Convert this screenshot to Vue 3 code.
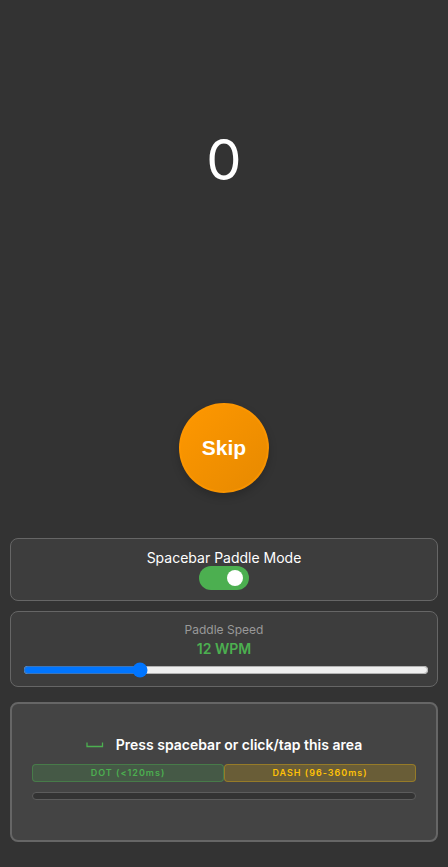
<script setup>
import { ref } from 'vue'

const count = ref(0)
const paddleMode = ref(true)
const wpm = ref(12)
</script>

<template>
  <main class="page">
    <section class="counter">
      <output class="count">{{ count }}</output>
    </section>
    <section class="action">
      <button type="button" class="skip">Skip</button>
    </section>

    <section class="card mode">
      <label class="mode-label" for="paddle-mode">Spacebar Paddle Mode</label>
      <input id="paddle-mode" v-model="paddleMode" class="toggle" type="checkbox" role="switch" />
    </section>

    <section class="card speed">
      <label class="speed-label" for="paddle-speed">Paddle Speed</label>
      <span class="speed-value">{{ wpm }} WPM</span>
      <input id="paddle-speed" v-model="wpm" class="slider" type="range" min="5" max="30" />
    </section>

    <button type="button" class="paddle">
      <span class="hint">
        <svg class="space-icon" viewBox="0 0 18 6" width="18" height="6" aria-hidden="true">
          <path d="M1 .5v4h15.500v-4" fill="none" stroke="#4caf50" stroke-width="1.300" />
        </svg>
        <span>Press spacebar or click/tap this area</span>
      </span>
      <span class="zones">
        <span class="zone dot">DOT (&lt;120ms)</span>
        <span class="zone dash">DASH (96-360ms)</span>
      </span>
      <span class="meter"></span>
    </button>
  </main>
</template>

<style>
body {
  margin: 0;
  background: #333;
}
</style>

<style scoped>
.page {
  box-sizing: border-box;
  min-height: 100vh;
  display: flex;
  flex-direction: column;
  padding: 0 10px 25px;
  background: #333;
  color: #fff;
  font-family: Inter, "Liberation Sans", sans-serif;
}
.counter {
  flex: 1;
  display: flex;
  align-items: center;
  justify-content: center;
}
.count {
  font-size: 56px;
  line-height: 64px;
}
.action {
  display: flex;
  justify-content: center;
  padding: 83px 0 45px;
}
.skip {
  box-sizing: border-box;
  width: 90px;
  height: 90px;
  padding: 0;
  border: 2px solid #ff9800;
  border-color: rgba(255, 152, 0, 0.6);
  border-radius: 50%;
  background: linear-gradient(135deg, #ff9800, #e68900) border-box;
  box-shadow: 0 4px 8px rgba(0, 0, 0, 0.2);
  color: #fff;
  font: bold 21px "Liberation Sans", Arial, sans-serif;
  cursor: pointer;
}
.card {
  display: flex;
  flex-direction: column;
  align-items: center;
  padding: 10px;
  border: 1px solid #666;
  border-radius: 8px;
  background: #3d3d3d;
}
.mode {
  margin-bottom: 10px;
}
.mode-label {
  font-size: 14px;
  line-height: 17px;
}
.toggle {
  appearance: none;
  box-sizing: border-box;
  display: flex;
  width: 50px;
  height: 24px;
  margin: 0;
  padding: 4px 6px;
  border-radius: 12px;
  background: #666;
  cursor: pointer;
}
.toggle::before {
  content: "";
  width: 16px;
  height: 16px;
  border-radius: 50%;
  background: #fff;
}
.toggle:checked {
  justify-content: flex-end;
  background: #4caf50;
}
.speed {
  margin-bottom: 15px;
  padding-bottom: 8px;
}
.speed-label {
  color: #999;
  font-size: 12px;
  line-height: 16px;
}
.speed-value {
  margin: 3px 0;
  color: #4caf50;
  font-size: 14px;
  font-weight: 600;
  line-height: 16px;
}
.slider {
  box-sizing: border-box;
  align-self: flex-start;
  width: 100%;
  height: 16px;
  margin: 2px 2px 0;
}
.paddle {
  box-sizing: border-box;
  min-height: 140px;
  display: flex;
  flex-direction: column;
  justify-content: center;
  padding: 20px 20px 28px;
  border: 2px solid #666;
  border-radius: 8px;
  background: #444;
  color: #fff;
  font-family: inherit;
  cursor: pointer;
}
.hint {
  display: flex;
  align-items: center;
  justify-content: center;
  gap: 12px;
  margin-bottom: 10px;
  font-size: 14px;
  font-weight: 600;
  line-height: 18px;
}
.zones {
  display: flex;
  margin-bottom: 10px;
}
.zone {
  flex: 1;
  border: 1px solid;
  border-radius: 4px;
  font-size: 9px;
  font-weight: 600;
  line-height: 16px;
  letter-spacing: 1px;
}
.dot {
  border-color: rgba(76, 175, 80, 0.4);
  background: rgba(76, 175, 80, 0.2);
  color: #4caf50;
}
.dash {
  border-color: rgba(255, 193, 7, 0.3);
  background: rgba(255, 193, 7, 0.2);
  color: #ffc107;
}
.meter {
  height: 6px;
  border: 1px solid #5c5c5c;
  border-radius: 4px;
  background: #333;
}
</style>
